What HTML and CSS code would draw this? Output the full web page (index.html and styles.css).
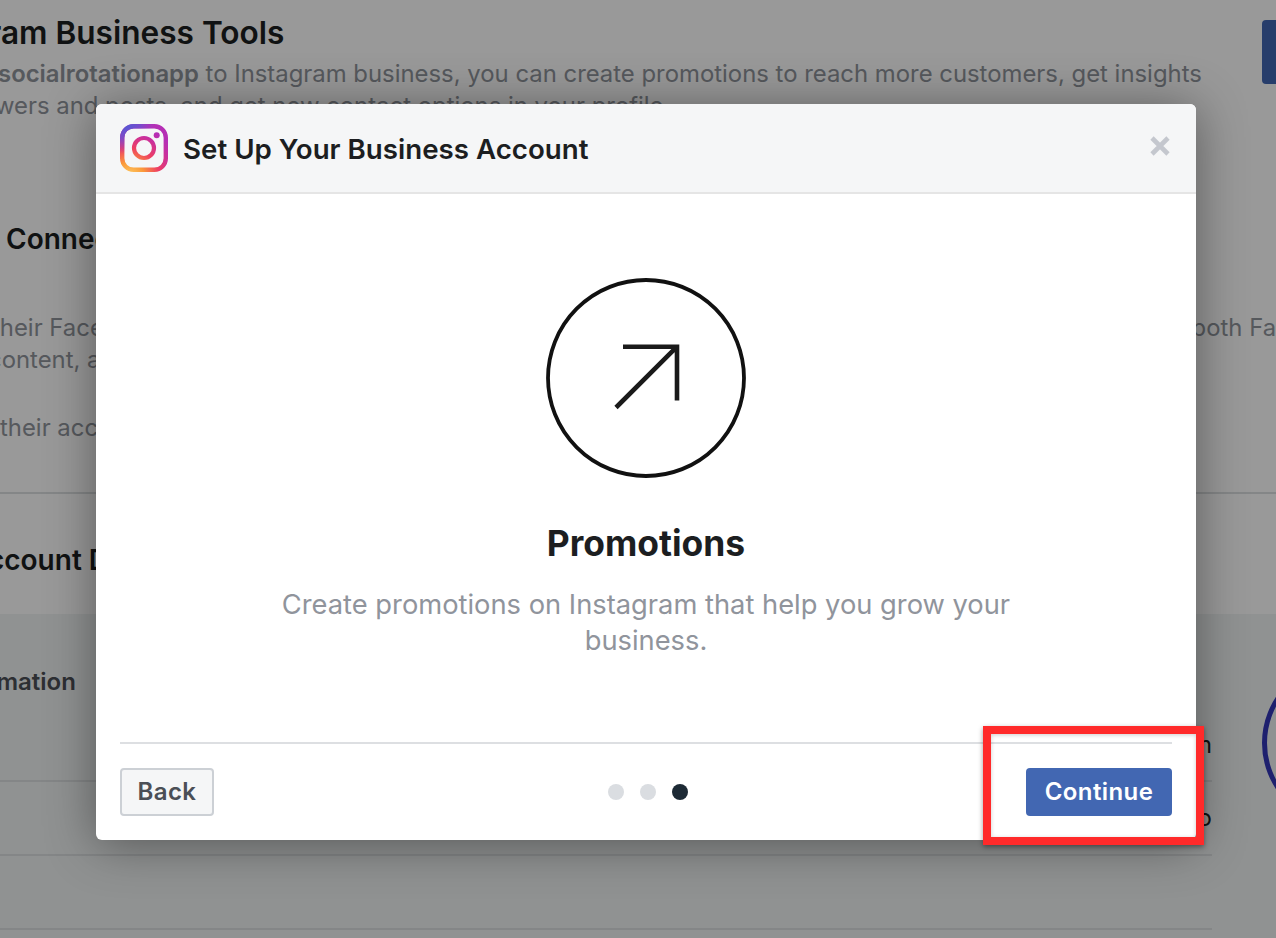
FILE: index.html
```html
<!DOCTYPE html>
<html lang="en">
<head>
  <meta charset="UTF-8">
  <meta name="viewport" content="width=device-width, initial-scale=1.0">
  <title>Set Up Your Business Account</title>
  <link rel="stylesheet" href="styles.css">
</head>
<body>
  <div class="page">
    <section class="tools">
      <div class="tools-text">
        <h2 class="tools-title">Instagram Business Tools</h2>
        <p class="line tools-line1">Connect <b>socialrotationapp</b> to Instagram business, you can create promotions to reach more customers, get insights</p>
        <p class="line tools-line2">followers and posts, and get new contact options in your profile.</p>
      </div>
      <a class="tools-btn" href="#"></a>
    </section>

    <section class="connect">
      <h2 class="connect-title">Connected Accounts</h2>
      <p class="line split"><span class="connect-line1">their Facebook</span><span>both Facebook</span></p>
      <p class="line connect-line2">content, and more</p>
      <p class="line connect-line3">their account</p>
    </section>

    <section class="details">
      <h2 class="details-title">Account Details</h2>
    </section>

    <section class="info">
      <h3 class="info-title">Information</h3>
      <div class="info-row info-row-first"><span>Instagram</span></div>
      <div class="info-row info-row-second"><span>Photo</span></div>
      <div class="info-row"></div>
      <div class="avatar"></div>
    </section>

    <div class="overlay"></div>

    <div class="modal">
      <header class="modal-head">
        <svg class="ig-logo" viewBox="0 0 48 48" fill="none">
          <defs>
            <radialGradient id="igWarm" gradientUnits="userSpaceOnUse" cx="9" cy="54" r="52">
              <stop offset="0" stop-color="#fdd56b"/>
              <stop offset="0.3" stop-color="#fb9a3a"/>
              <stop offset="0.58" stop-color="#ee3f62"/>
              <stop offset="0.85" stop-color="#c82f9f"/>
              <stop offset="1" stop-color="#b52fb5"/>
            </radialGradient>
            <radialGradient id="igCool" gradientUnits="userSpaceOnUse" cx="6" cy="0" r="30">
              <stop offset="0" stop-color="#4f5bd5"/>
              <stop offset="0.5" stop-color="#6f4fd0" stop-opacity="0.8"/>
              <stop offset="1" stop-color="#9a3fc4" stop-opacity="0"/>
            </radialGradient>
          </defs>
          <rect x="2.2" y="2.2" width="43.6" height="43.6" rx="11.5" stroke="url(#igWarm)" stroke-width="4.4"/>
          <rect x="2.2" y="2.2" width="43.6" height="43.6" rx="11.5" stroke="url(#igCool)" stroke-width="4.4"/>
          <circle cx="24" cy="24" r="10" stroke="url(#igWarm)" stroke-width="4.2"/>
          <circle cx="36.7" cy="11.2" r="3" fill="url(#igWarm)"/>
        </svg>
        <h1 class="modal-title">Set Up Your Business Account</h1>
        <svg class="close-icon" viewBox="0 0 20 20">
          <path d="M2 2 L18 18 M18 2 L2 18" stroke="#c4c7ce" stroke-width="4.6" fill="none"/>
        </svg>
      </header>

      <div class="modal-body">
        <svg class="promo-icon" viewBox="0 0 200 200" fill="none">
          <circle cx="100" cy="100" r="98" stroke="#111" stroke-width="3.8"/>
          <path d="M77 68.7 H131 V122.5 M131 68.7 L70 129.5" stroke="#1a1a1a" stroke-width="4.6"/>
        </svg>
        <h2 class="promo-title">Promotions</h2>
        <p class="promo-text">Create promotions on Instagram that help you grow your business.</p>
      </div>

      <footer class="modal-foot">
        <button class="btn btn-back">Back</button>
        <div class="dots">
          <span class="dot"></span>
          <span class="dot"></span>
          <span class="dot dot-on"></span>
        </div>
        <button class="btn btn-next">Continue</button>
      </footer>
    </div>

    <div class="red-box"></div>
  </div>
</body>
</html>
```

FILE: styles.css
```css
* {
  box-sizing: border-box;
}

body {
  margin: 0;
  font-family: 'Inter', 'Liberation Sans', sans-serif;
}

.page {
  position: relative;
  width: 1276px;
  height: 938px;
  overflow: hidden;
  background-color: #fff;
  display: flex;
  flex-direction: column;
}

h1, h2, h3, p {
  margin: 0;
}

.line {
  font-size: 23.88px;
  line-height: 32px;
  color: #90949c;
  white-space: nowrap;
}

/* top section */
.tools {
  height: 190px;
  padding-top: 15px;
  display: flex;
  justify-content: space-between;
  flex-shrink: 0;
}

.tools-title {
  font-size: 31.6px;
  line-height: 36px;
  font-weight: 600;
  color: #1c1e21;
  margin-left: -106px;
  margin-bottom: 7px;
  white-space: nowrap;
}

.tools-line1 {
  margin-left: -104px;
}

.tools-line1 b {
  font-weight: 600;
}

.tools-line2 {
  margin-left: -53px;
}

.tools-btn {
  display: block;
  width: 60px;
  height: 64px;
  margin-top: 5px;
  margin-right: -46px;
  background-color: #4267b2;
  border-radius: 4px;
  flex-shrink: 0;
}

/* connect section */
.connect {
  height: 304px;
  padding-top: 31px;
  border-bottom: 2px solid #dddfe2;
  flex-shrink: 0;
}

.connect-title {
  font-size: 28px;
  line-height: 36px;
  font-weight: 600;
  color: #1c1e21;
  margin-left: 6px;
  margin-bottom: 55px;
}

.split {
  display: flex;
  justify-content: space-between;
  margin-right: -84px;
}

.connect-line1 {
  margin-left: -8px;
}

.connect-line2 {
  margin-left: -12px;
}

.connect-line3 {
  margin-top: 36px;
}

/* account details */
.details {
  height: 120px;
  padding-top: 48px;
  flex-shrink: 0;
}

.details-title {
  font-size: 28px;
  line-height: 36px;
  font-weight: 600;
  color: #1c1e21;
  margin-left: -32px;
}

/* info section */
.info {
  position: relative;
  flex: 1;
  background-color: #f1f3f3;
  padding-top: 54px;
}

.info-title {
  font-size: 24px;
  line-height: 28px;
  font-weight: 600;
  color: #4b4f56;
  margin-left: -58px;
}

.info-row {
  width: 1212px;
  height: 74px;
  border-bottom: 2px solid #dddfe2;
  display: flex;
  justify-content: flex-end;
  align-items: center;
  font-size: 24px;
  color: #1c1e21;
}

.info-row-first {
  height: 86px;
  padding-top: 12px;
}

.info-row-second {
  padding-bottom: 2px;
}

.avatar {
  position: absolute;
  left: 1262px;
  top: 46px;
  width: 166px;
  height: 166px;
  border: 5px solid #3236b8;
  border-radius: 50%;
}

/* dark layer over page */
.overlay {
  position: absolute;
  inset: 0;
  background-color: rgba(0, 0, 0, 0.4);
}

/* dialog */
.modal {
  position: absolute;
  left: 96px;
  top: 104px;
  width: 1100px;
  height: 736px;
  background-color: #fff;
  border-radius: 6px;
  box-shadow: 0 4px 50px rgba(0, 0, 0, 0.42);
  display: flex;
  flex-direction: column;
  overflow: hidden;
}

.modal-head {
  height: 90px;
  padding: 0 26px 0 24px;
  background-color: #f5f6f7;
  border-bottom: 2px solid #e5e5e5;
  display: flex;
  align-items: center;
  flex-shrink: 0;
}

.ig-logo {
  width: 48px;
  height: 48px;
  margin-right: 15px;
}

.modal-title {
  flex: 1;
  margin-top: 2px;
  font-size: 27.7px;
  line-height: 36px;
  font-weight: 600;
  color: #1c1e21;
}

.close-icon {
  width: 20px;
  height: 20px;
  margin-bottom: 4px;
}

.modal-body {
  flex: 1;
  padding-top: 84px;
  display: flex;
  flex-direction: column;
  align-items: center;
}

.promo-icon {
  width: 200px;
  height: 200px;
}

.promo-title {
  margin-top: 43px;
  font-size: 35.4px;
  line-height: 46px;
  font-weight: 700;
  color: #1c1e21;
}

.promo-text {
  width: 760px;
  margin-top: 20px;
  font-size: 27.3px;
  line-height: 36px;
  text-align: center;
  color: #90949c;
}

.modal-foot {
  margin: 0 24px;
  height: 98px;
  padding-top: 24px;
  border-top: 2px solid #dddfe2;
  display: grid;
  grid-template-columns: 1fr auto 1fr;
  align-items: start;
  flex-shrink: 0;
}

.btn {
  height: 48px;
  padding: 0 0 2px;
  border-radius: 4px;
  font-family: inherit;
  font-size: 24px;
  font-weight: 600;
  letter-spacing: 0.4px;
  cursor: pointer;
}

.btn-back {
  width: 94px;
  justify-self: start;
  background-color: #f5f6f7;
  border: 2px solid #ccd0d5;
  color: #4b4f56;
}

.btn-next {
  width: 146px;
  justify-self: end;
  background-color: #4267b2;
  border: none;
  color: #fff;
}

.dots {
  display: flex;
  gap: 16px;
  margin-top: 16px;
  margin-left: 4px;
}

.dot {
  width: 16px;
  height: 16px;
  border-radius: 50%;
  background-color: #dadde1;
}

.dot-on {
  background-color: #1d2a35;
}

/* annotation */
.red-box {
  position: absolute;
  left: 983px;
  top: 726px;
  width: 221px;
  height: 119px;
  border: 8px solid #ff2a2a;
  box-shadow: 0 2px 5px rgba(0, 0, 0, 0.4), inset 0 1px 4px rgba(0, 0, 0, 0.2);
}
```
